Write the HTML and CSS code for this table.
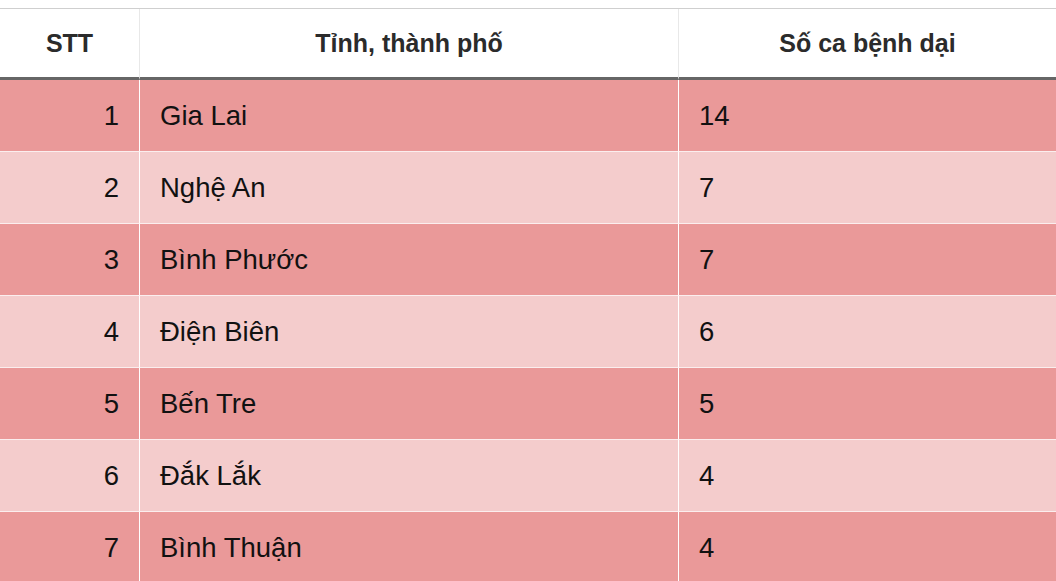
FILE: index.html
```html
<!DOCTYPE html>
<html lang="vi">
<head>
<meta charset="utf-8">
<title>Số ca bệnh dại</title>
<link rel="stylesheet" href="styles.css">
</head>
<body>
<table class="rabies">
  <colgroup>
    <col class="c-stt">
    <col class="c-name">
    <col class="c-count">
  </colgroup>
  <thead>
    <tr>
      <th>STT</th>
      <th>Tỉnh, thành phố</th>
      <th>Số ca bệnh dại</th>
    </tr>
  </thead>
  <tbody>
    <tr class="dark"><td class="num">1</td><td>Gia Lai</td><td>14</td></tr>
    <tr class="light"><td class="num">2</td><td>Nghệ An</td><td>7</td></tr>
    <tr class="dark"><td class="num">3</td><td>Bình Phước</td><td>7</td></tr>
    <tr class="light"><td class="num">4</td><td>Điện Biên</td><td>6</td></tr>
    <tr class="dark"><td class="num">5</td><td>Bến Tre</td><td>5</td></tr>
    <tr class="light"><td class="num">6</td><td>Đắk Lắk</td><td>4</td></tr>
    <tr class="dark"><td class="num">7</td><td>Bình Thuận</td><td>4</td></tr>
  </tbody>
</table>
</body>
</html>
```
FILE: styles.css
```css
html, body {
  margin: 0;
  padding: 0;
  background: #ffffff;
}
body {
  padding-top: 8px;
  font-family: "Liberation Sans", Arial, sans-serif;
}
.rabies {
  width: 100%;
  table-layout: fixed;
  border-collapse: separate;
  border-spacing: 0;
  border-top: 1px solid #cfcfcf;
}
.c-stt { width: 140px; }
.c-name { width: 539px; }
.rabies th,
.rabies td {
  box-sizing: border-box;
  padding: 0 20px;
  border-right: 1px solid #ffffff;
  vertical-align: middle;
}
.rabies th:last-child,
.rabies td:last-child {
  border-right: none;
}
.rabies th {
  height: 71px;
  font-size: 25px;
  font-weight: bold;
  color: #2b2b2b;
  text-align: center;
  border-right-color: #e8e8e8;
  border-bottom: 3px solid #666666;
}
.rabies td {
  height: 72px;
  font-size: 27.5px;
  color: #111111;
  text-align: left;
  border-bottom: 1px solid #fbeeee;
}
.rabies td.num {
  text-align: right;
}
.dark td { background: #ea9999; }
.light td { background: #f4cccc; }
```
